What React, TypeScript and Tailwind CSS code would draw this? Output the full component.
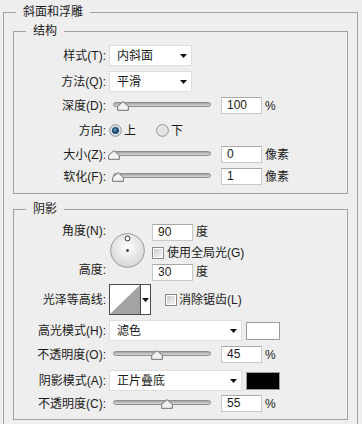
import React from "react";

function Label({ children }: { children: React.ReactNode }) {
  return <div className="w-[92px] shrink-0 text-right whitespace-nowrap">{children}</div>;
}

function Arrow() {
  return (
    <svg width="7" height="4" viewBox="0 0 7 4" className="shrink-0">
      <path d="M0 0 H7 L3.5 4 Z" fill="#111" />
    </svg>
  );
}

function Dropdown({ value, w }: { value: string; w: string }) {
  return (
    <div className={`ml-[3px] flex h-[21px] items-center justify-between bg-white border border-[#dedede] pl-[7px] pr-[4px] ${w}`}>
      <span>{value}</span>
      <Arrow />
    </div>
  );
}

function TextBox({ value, w = "w-[41px]" }: { value: string; w?: string }) {
  return (
    <div className={`h-[17px] shrink-0 bg-white border border-[#c8c8c8] border-t-[#a9a9a9] pl-[5px] leading-[15px] ${w}`}>
      {value}
    </div>
  );
}

function Slider({ thumb }: { thumb: number }) {
  return (
    <div className="relative ml-[3px] h-[17px] w-[104px] shrink-0">
      <div className="ml-[4px] mt-[5px] h-[5px] w-[98px] rounded-full border border-[#8e8e8e] bg-linear-to-b from-[#a4a4a4] to-[#d8d8d8]" />
      <svg className="absolute top-[4px]" style={{ left: thumb }} width="12" height="10" viewBox="0 0 12 10">
        <path d="M6 0.6 L11.4 5.2 V9.4 H0.6 V5.2 Z" fill="#dedede" stroke="#7c7c7c" strokeLinejoin="round" />
        <path d="M6 2 L10 5.6 V8.2 H2 V5.6 Z" fill="#f2f2f2" />
      </svg>
    </div>
  );
}

function Radio({ on }: { on: boolean }) {
  return (
    <svg width="13" height="13" viewBox="0 0 13 13" className="shrink-0">
      <circle cx="6.5" cy="6.5" r="5.8" fill={on ? "#dfe6ec" : "#f0f0f0"} stroke="#8a8a8a" strokeWidth="1" />
      {on ? (
        <>
          <circle cx="6.5" cy="6.5" r="3.6" fill="#24506f" />
          <circle cx="6" cy="5.8" r="1.6" fill="#4f8fb8" />
        </>
      ) : (
        <circle cx="6.5" cy="6.5" r="4" fill="#e2e2e2" />
      )}
    </svg>
  );
}

function Checkbox() {
  return (
    <div className="flex h-[12px] w-[12px] shrink-0 items-center justify-center border border-[#8a8a8a] bg-white">
      <div className="h-[8px] w-[8px] bg-linear-to-br from-[#cfcfcf] to-[#f4f4f4]" />
    </div>
  );
}

function Dial() {
  return (
    <svg width="35" height="35" viewBox="0 0 35 35" className="shrink-0">
      <defs>
        <radialGradient id="dialg" cx="0.5" cy="0.4" r="0.6">
          <stop offset="0" stopColor="#ffffff" />
          <stop offset="1" stopColor="#d6d6d6" />
        </radialGradient>
      </defs>
      <circle cx="17.5" cy="17.5" r="16.8" fill="url(#dialg)" stroke="#9a9a9a" />
      <circle cx="17.5" cy="5.5" r="2.4" fill="#fff" stroke="#333" strokeWidth="1" />
      <circle cx="17.5" cy="17.5" r="1.4" fill="#444" />
    </svg>
  );
}

function Contour() {
  return (
    <div className="ml-[3px] flex h-[31px] w-[42px] shrink-0 items-center border border-[#4a4a4a] bg-white">
      <svg width="30" height="29" viewBox="0 0 30 29" className="shrink-0">
        <path d="M0 29 L30 0 V29 Z" fill="#a3a3a3" />
      </svg>
      <div className="h-full w-px bg-[#4a4a4a]" />
      <div className="flex flex-1 items-center justify-center">
        <Arrow />
      </div>
    </div>
  );
}

function Fieldset({ title, className, children }: { title: string; className: string; children?: React.ReactNode }) {
  return (
    <fieldset className={`border border-[#a0a0a0] ${className}`}>
      <legend className="ml-[12px] px-[7px] leading-[16px]">{title}</legend>
      {children}
    </fieldset>
  );
}

export default function App() {
  return (
    <div className="h-[424px] w-[362px] overflow-hidden bg-[#eeeeee] pl-[3px] pt-[4px] text-[12px] text-[#1a1a1a] font-['Liberation_Sans','Noto_Sans_CJK_SC',sans-serif]">
      <Fieldset title="斜面和浮雕" className="w-[355px] pb-[30px]">
        <Fieldset title="结构" className="ml-[9px] mt-[3px] w-[335px] pb-[8px]">
          <div className="mt-[6px] flex items-center">
            <Label>样式(T):</Label>
            <Dropdown value="内斜面" w="w-[83px]" />
          </div>
          <div className="mt-[5px] flex items-center">
            <Label>方法(Q):</Label>
            <Dropdown value="平滑" w="w-[83px]" />
          </div>
          <div className="mt-[5px] flex h-[17px] items-center">
            <Label>深度(D):</Label>
            <Slider thumb={8} />
            <div className="ml-[8px]">
              <TextBox value="100" />
            </div>
            <span className="ml-[3px]">%</span>
          </div>
          <div className="mt-[8px] flex h-[17px] items-center">
            <Label>方向:</Label>
            <div className="ml-[3px] flex items-center gap-[2px]">
              <Radio on />
              <span>上</span>
            </div>
            <div className="ml-[20px] flex items-center gap-[2px]">
              <Radio on={false} />
              <span>下</span>
            </div>
          </div>
          <div className="mt-[7px] flex h-[17px] items-center">
            <Label>大小(Z):</Label>
            <Slider thumb={-1} />
            <div className="ml-[8px]">
              <TextBox value="0" />
            </div>
            <span className="ml-[3px]">像素</span>
          </div>
          <div className="mt-[5px] flex h-[17px] items-center">
            <Label>软化(F):</Label>
            <Slider thumb={3} />
            <div className="ml-[8px]">
              <TextBox value="1" />
            </div>
            <span className="ml-[3px]">像素</span>
          </div>
        </Fieldset>

        <Fieldset title="阴影" className="ml-[9px] mt-[7px] w-[335px] pb-[7px]">
          <div className="mt-[6px] flex h-[56px]">
            <div className="flex w-[92px] shrink-0 flex-col justify-between text-right">
              <div className="leading-[17px]">角度(N):</div>
              <div className="leading-[17px]">高度:</div>
            </div>
            <div className="ml-[4px] mt-[10px]">
              <Dial />
            </div>
            <div className="ml-[7px] flex flex-col">
              <div className="flex items-center">
                <TextBox value="90" />
                <span className="ml-[3px]">度</span>
              </div>
              <div className="mt-[4px] flex h-[16px] items-center gap-[3px]">
                <Checkbox />
                <span>使用全局光(G)</span>
              </div>
              <div className="mt-[2px] flex items-center">
                <TextBox value="30" />
                <span className="ml-[3px]">度</span>
              </div>
            </div>
          </div>
          <div className="mt-[5px] flex items-center">
            <Label>光泽等高线:</Label>
            <Contour />
            <div className="ml-[14px] flex items-center gap-[2px]">
              <Checkbox />
              <span>消除锯齿(L)</span>
            </div>
          </div>
          <div className="mt-[5px] flex items-center">
            <Label>高光模式(H):</Label>
            <Dropdown value="滤色" w="w-[133px]" />
            <div className="ml-[4px] h-[18px] w-[34px] border border-[#9a9a9a] bg-white" />
          </div>
          <div className="mt-[5px] flex h-[17px] items-center">
            <Label>不透明度(O):</Label>
            <Slider thumb={42} />
            <div className="ml-[8px]">
              <TextBox value="45" />
            </div>
            <span className="ml-[3px]">%</span>
          </div>
          <div className="mt-[7px] flex items-center">
            <Label>阴影模式(A):</Label>
            <Dropdown value="正片叠底" w="w-[133px]" />
            <div className="ml-[4px] h-[18px] w-[34px] border border-[#9a9a9a] bg-black" />
          </div>
          <div className="mt-[4px] flex h-[17px] items-center">
            <Label>不透明度(C):</Label>
            <Slider thumb={52} />
            <div className="ml-[8px]">
              <TextBox value="55" />
            </div>
            <span className="ml-[3px]">%</span>
          </div>
        </Fieldset>
      </Fieldset>
    </div>
  );
}
